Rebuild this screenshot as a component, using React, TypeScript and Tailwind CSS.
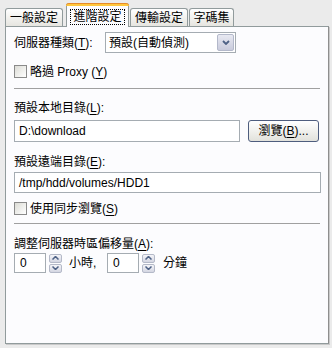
const F = "font-[family-name:'Liberation_Sans','Noto_Sans_CJK_TC',sans-serif]";

function U({ children }: { children: React.ReactNode }) {
  return <span className="underline underline-offset-2">{children}</span>;
}

function Tab({ w, children }: { w: string; children: React.ReactNode }) {
  return (
    <div
      className={`${w} h-[18px] border border-b-0 border-[#919b9c] rounded-t-[3px] bg-gradient-to-b from-white to-[#e6e5e0] flex items-center justify-center leading-none`}
    >
      {children}
    </div>
  );
}

function Check({ children }: { children: React.ReactNode }) {
  return (
    <div className="flex items-center h-[13px]">
      <div className="w-[13px] h-[13px] border border-[#8a8a8a] bg-gradient-to-br from-[#dcdcd6] to-white" />
      <span className="ml-[3px] leading-none">{children}</span>
    </div>
  );
}

function Spin() {
  return (
    <div className="flex flex-col gap-px ml-[3px] h-[20px] justify-center">
      {[0, 1].map((i) => (
        <div
          key={i}
          className="w-[13px] h-[9px] rounded-[2px] border border-[#b4b9c8] bg-gradient-to-b from-[#f4f4f8] to-[#d4d6e2] flex items-center justify-center"
        >
          <svg width="7" height="4" viewBox="0 0 7 4">
            <path
              d={i === 0 ? "M0.5 3.5 L3.5 0.5 L6.5 3.5" : "M0.5 0.5 L3.5 3.5 L6.5 0.5"}
              fill="none"
              stroke="#4d6185"
              strokeWidth="1.5"
            />
          </svg>
        </div>
      ))}
    </div>
  );
}

export default function App() {
  return (
    <div className={`w-[332px] h-[348px] bg-[#ebebeb] pl-[5px] pt-[3px] text-[12px] text-black ${F}`}>
      <div className="flex items-end h-[23px] relative z-10">
        <Tab w="w-[58px]">一般設定</Tab>
        <div className="w-[63px] h-[24px] -mb-px ml-[3px] border border-t-0 border-b-0 border-[#919b9c] rounded-t-[3px] bg-[#fcfcfe] flex flex-col">
          <div className="h-[3px] bg-[#ffc73c] border-t border-[#e68b2c] rounded-t-[3px] -mx-px" />
          <div className="flex-1 flex items-center justify-center">
            <span className="border border-dotted border-black px-[2px] leading-[14px]">進階設定</span>
          </div>
        </div>
        <Tab w="w-[58px] ml-px">傳輸設定</Tab>
        <Tab w="w-[45px] ml-px">字碼集</Tab>
      </div>
      <div className="w-[324px] h-[318px] border border-[#919b9c] border-r-[#8e8e8e] shadow-[1px_1px_0_#c9c9c9] bg-[#fcfcfe] pl-[8px] pr-[7px] flex flex-col">
        <div className="flex items-center h-[21px] mt-[5px]">
          <span className="w-[91px] leading-none">
            伺服器種類(<U>T</U>):
          </span>
          <div className="w-[131px] h-[21px] border border-[#a5acb2] bg-white flex items-center">
            <span className="flex-1 pl-[3px] leading-none">預設(自動偵測)</span>
            <div className="w-[17px] h-[17px] mr-px rounded-[2px] border border-[#b3b8ca] bg-gradient-to-b from-[#e8e9f2] to-[#c9cbdc] flex items-center justify-center">
              <svg width="8" height="5" viewBox="0 0 8 5">
                <path d="M1 1 L4 4 L7 1" fill="none" stroke="#4d6185" strokeWidth="1.8" />
              </svg>
            </div>
          </div>
        </div>
        <div className="mt-[12px]">
          <Check>
            略過 Proxy (<U>Y</U>)
          </Check>
        </div>
        <div className="mt-[10px] h-px bg-[#a0a0a0] mr-px" />
        <div className="mt-[12px] leading-[14px]">
          預設本地目錄(<U>L</U>):
        </div>
        <div className="mt-[5px] flex items-center h-[22px]">
          <div className="w-[226px] h-[22px] border border-[#a5acb2] bg-white flex items-center pl-[4px] leading-none">
            D:\download
          </div>
          <div className="ml-[8px] w-[71px] h-[22px] rounded-[3px] border border-[#4e5d7e] bg-gradient-to-b from-white to-[#e2e2dc] flex items-center justify-center leading-none">
            瀏覽(<U>B</U>)...
          </div>
        </div>
        <div className="mt-[13px] leading-[14px]">
          預設遠端目錄(<U>E</U>):
        </div>
        <div className="mt-[3px] w-[307px] h-[21px] border border-[#a5acb2] bg-white flex items-center pl-[4px] leading-none">
          /tmp/hdd/volumes/HDD1
        </div>
        <div className="mt-[9px]">
          <Check>
            使用同步瀏覽(<U>S</U>)
          </Check>
        </div>
        <div className="mt-[8px] h-px bg-[#a0a0a0] mr-px" />
        <div className="mt-[13px] leading-[14px]">
          調整伺服器時區偏移量(<U>A</U>):
        </div>
        <div className="mt-[2px] flex items-center h-[20px]">
          <div className="w-[32px] h-[20px] border border-[#a5acb2] bg-white flex items-center pl-[5px] leading-none">
            0
          </div>
          <Spin />
          <span className="ml-[7px] leading-none w-[31px]">小時,</span>
          <div className="ml-[7px] w-[32px] h-[20px] border border-[#a5acb2] bg-white flex items-center pl-[5px] leading-none">
            0
          </div>
          <Spin />
          <span className="ml-[8px] leading-none">分鐘</span>
        </div>
      </div>
    </div>
  );
}
